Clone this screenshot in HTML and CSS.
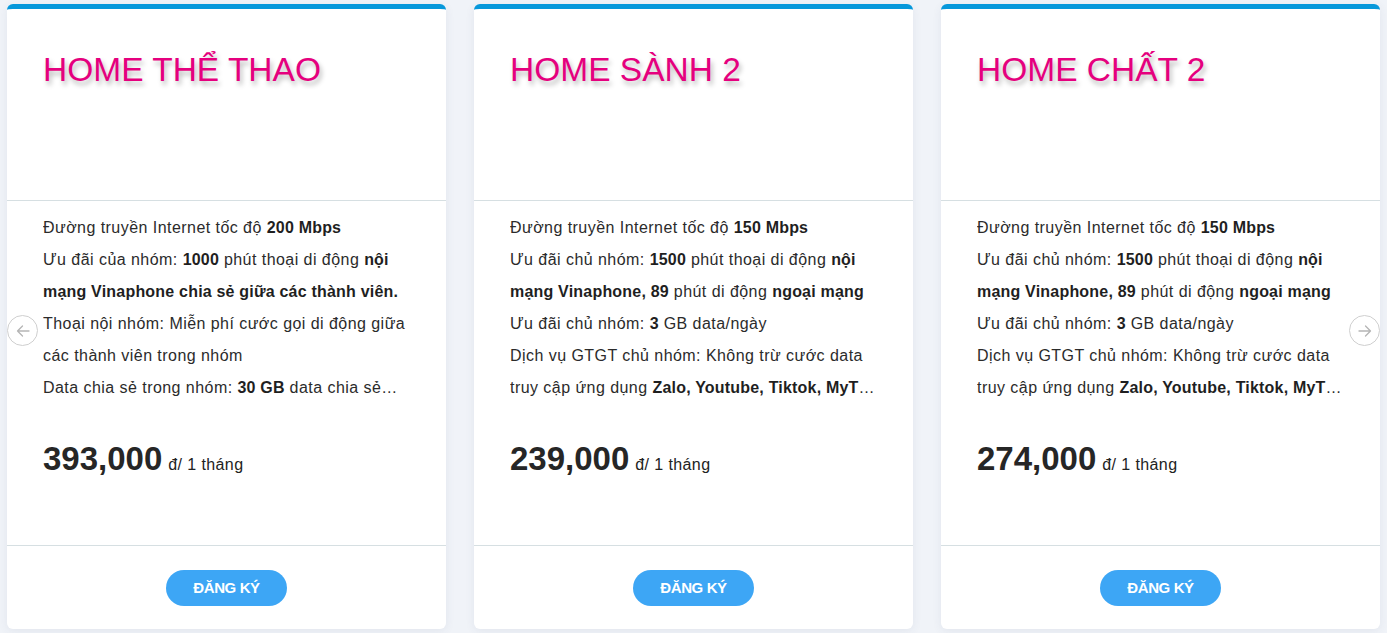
FILE: index.html
```html
<!DOCTYPE html>
<html lang="vi">
<head>
<meta charset="utf-8">
<title>Gói cước Home</title>
<link rel="stylesheet" href="styles.css">
</head>
<body>
<div class="slider">
  <div class="track">
    <div class="card">
      <div class="card-head"><h2 class="title">HOME THỂ THAO</h2></div>
      <div class="card-body">
        <div class="desc">
          <p>Đường truyền Internet tốc độ <b>200 Mbps</b></p>
          <p>Ưu đãi của nhóm: <b>1000</b> phút thoại di động <b>nội mạng Vinaphone chia sẻ giữa các thành viên.</b></p>
          <p>Thoại nội nhóm: Miễn phí cước gọi di động giữa các thành viên trong nhóm</p>
          <p>Data chia sẻ trong nhóm: <b>30 GB</b> data chia sẻ cho các thành viên trong nhóm</p>
        </div>
        <div class="price"><span class="amount">393,000</span> <span class="unit">đ/ 1 tháng</span></div>
      </div>
      <div class="card-foot"><button class="btn">ĐĂNG KÝ</button></div>
    </div>
    <div class="card">
      <div class="card-head"><h2 class="title">HOME SÀNH 2</h2></div>
      <div class="card-body">
        <div class="desc">
          <p>Đường truyền Internet tốc độ <b>150 Mbps</b></p>
          <p>Ưu đãi chủ nhóm: <b>1500</b> phút thoại di động <b>nội mạng Vinaphone, 89</b> phút di động <b>ngoại mạng</b></p>
          <p>Ưu đãi chủ nhóm: <b>3</b> GB data/ngày</p>
          <p>Dịch vụ GTGT chủ nhóm: Không trừ cước data truy cập ứng dụng <b>Zalo, Youtube, Tiktok, MyTV, Facebook</b></p>
        </div>
        <div class="price"><span class="amount">239,000</span> <span class="unit">đ/ 1 tháng</span></div>
      </div>
      <div class="card-foot"><button class="btn">ĐĂNG KÝ</button></div>
    </div>
    <div class="card">
      <div class="card-head"><h2 class="title">HOME CHẤT 2</h2></div>
      <div class="card-body">
        <div class="desc">
          <p>Đường truyền Internet tốc độ <b>150 Mbps</b></p>
          <p>Ưu đãi chủ nhóm: <b>1500</b> phút thoại di động <b>nội mạng Vinaphone, 89</b> phút di động <b>ngoại mạng</b></p>
          <p>Ưu đãi chủ nhóm: <b>3</b> GB data/ngày</p>
          <p>Dịch vụ GTGT chủ nhóm: Không trừ cước data truy cập ứng dụng <b>Zalo, Youtube, Tiktok, MyTV, Facebook</b></p>
        </div>
        <div class="price"><span class="amount">274,000</span> <span class="unit">đ/ 1 tháng</span></div>
      </div>
      <div class="card-foot"><button class="btn">ĐĂNG KÝ</button></div>
    </div>
  </div>
  <button class="nav nav-prev" aria-label="Trước">
    <svg width="16" height="16" viewBox="0 0 16 16"><path d="M14 8H2.5M7.5 3 2.5 8l5 5" fill="none" stroke="#b5b5b5" stroke-width="1.3" stroke-linecap="round" stroke-linejoin="round"/></svg>
  </button>
  <button class="nav nav-next" aria-label="Sau">
    <svg width="16" height="16" viewBox="0 0 16 16"><path d="M2 8h11.5M8.5 3l5 5-5 5" fill="none" stroke="#b5b5b5" stroke-width="1.3" stroke-linecap="round" stroke-linejoin="round"/></svg>
  </button>
</div>
</body>
</html>
```
FILE: styles.css
```css
* { box-sizing: border-box; }
html, body { margin: 0; padding: 0; }
body {
  background: #f0f3f8;
  font-family: "Liberation Sans", Arial, sans-serif;
  color: #2b2b2b;
  width: 1387px;
  height: 633px;
  overflow: hidden;
}
.slider {
  position: relative;
  padding: 4px 7px 0 7px;
}
.track {
  display: flex;
  gap: 28px;
}
.card {
  width: 439px;
  height: 625px;
  flex: none;
  background: #fff;
  border-top: 5px solid #0698db;
  border-radius: 6px;
  box-shadow: 0 2px 10px rgba(60, 80, 110, 0.08);
  display: flex;
  flex-direction: column;
}
.card-head {
  height: 192px;
  padding: 41px 36px 0 36px;
  border-bottom: 1px solid #d6dfe2;
}
.title {
  margin: 0;
  font-size: 33.5px;
  line-height: 1.2;
  font-weight: 400;
  color: #e5007e;
  text-shadow: 2px 4px 5px rgba(0, 0, 0, 0.28);
}
.card-body {
  height: 345px;
  padding: 11px 36px 0 36px;
  border-bottom: 1px solid #d6dfe2;
}
.desc {
  font-size: 16px;
  letter-spacing: 0.45px;
  line-height: 32px;
  color: #2b2b2b;
  display: -webkit-box;
  -webkit-box-orient: vertical;
  -webkit-line-clamp: 6;
  overflow: hidden;
  height: 192px;
}
.desc p { margin: 0; }
.desc b { font-weight: 700; color: #1f1f1f; letter-spacing: 0.2px; }
.price {
  margin-top: 35px;
  display: flex;
  align-items: baseline;
  gap: 6px;
  line-height: 40px;
}
.amount {
  font-size: 33px;
  font-weight: 700;
  color: #262626;
}
.unit {
  font-size: 16px;
  letter-spacing: 0.4px;
  color: #222;
}
.card-foot {
  flex: 1;
  display: flex;
  align-items: center;
  justify-content: center;
}
.btn {
  width: 121px;
  height: 36px;
  border: 0;
  border-radius: 18px;
  background: #3da6f5;
  color: #fff;
  font-family: "Liberation Sans", Arial, sans-serif;
  font-size: 15px;
  letter-spacing: -0.4px;
  font-weight: 700;
  cursor: pointer;
}
.nav {
  position: absolute;
  top: 315px;
  width: 31px;
  height: 31px;
  border-radius: 50%;
  border: 1px solid #cfcfcf;
  background: rgba(255, 255, 255, 0.85);
  padding: 0;
  display: flex;
  align-items: center;
  justify-content: center;
  cursor: pointer;
}
.nav-prev { left: 7px; }
.nav-next { left: 1349px; }
```
